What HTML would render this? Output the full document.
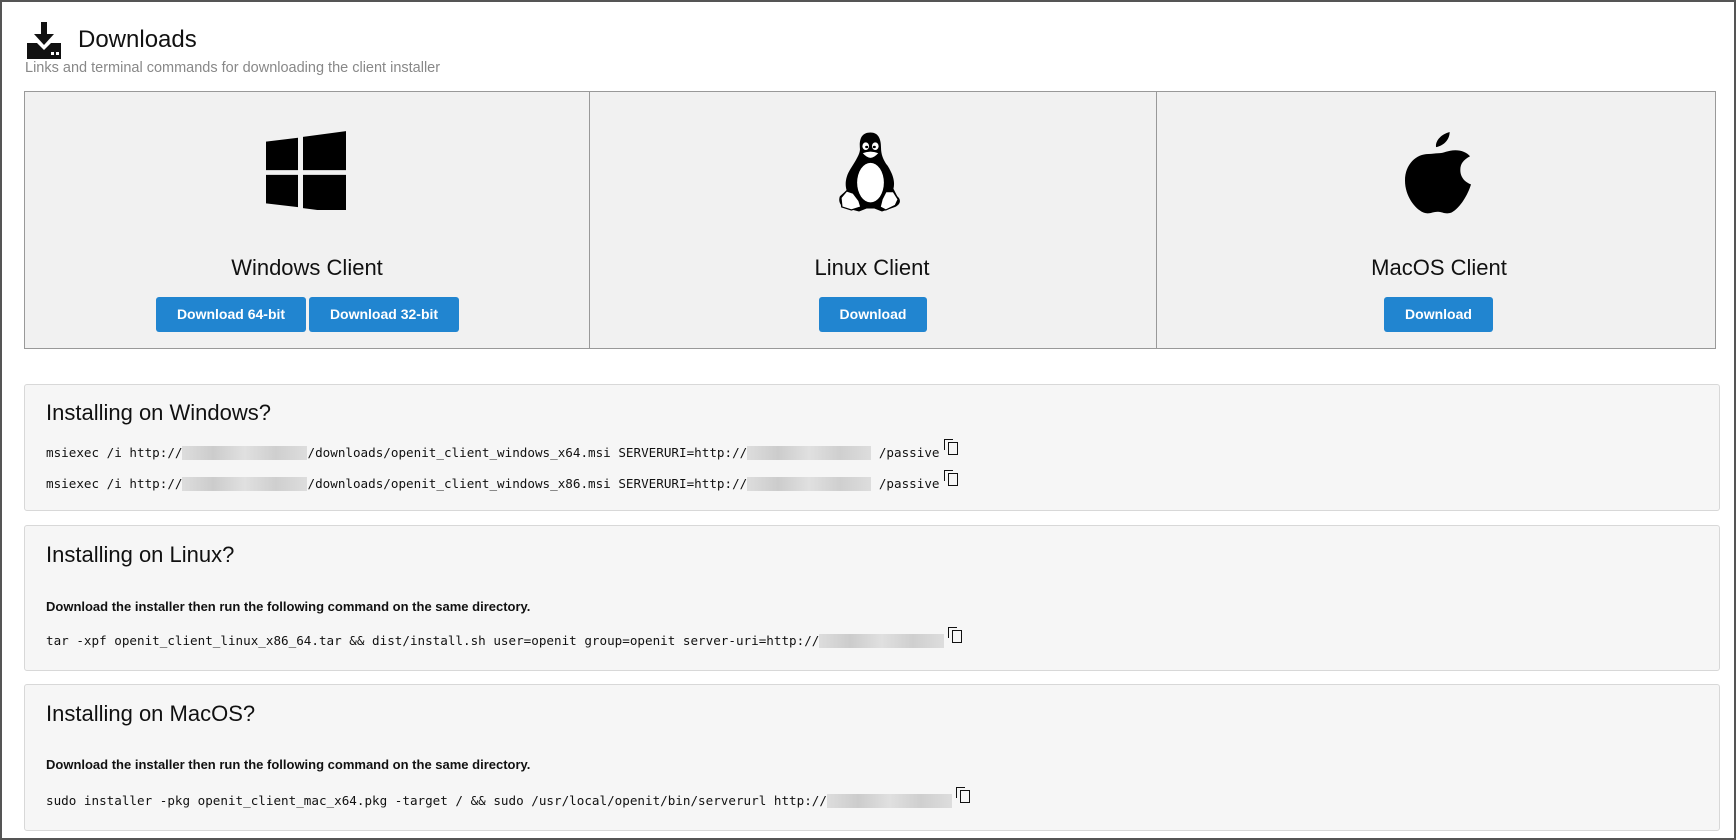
<!DOCTYPE html>
<html><head><meta charset="utf-8"><style>
*{box-sizing:border-box;margin:0;padding:0}
body{width:1736px;height:840px;background:#fff;font-family:"Liberation Sans",sans-serif;position:relative;overflow:hidden;border:2px solid #555;}
.a{position:absolute}
.t{font-size:24px;color:#111}
.sub{font-size:14.5px;color:#888}
.cards{left:22px;top:89px;width:1692px;height:258px;border:1px solid #999;background:#f1f1f1}
.div{top:89px;width:1px;height:258px;background:#999}
.ct{font-size:22px;color:#111;width:564px;text-align:center}
.btn{background:#2185d0;color:#fff;font-weight:bold;font-size:14px;height:35px;line-height:35px;text-align:center;border-radius:3px}
.pan{left:22px;width:1696px;background:#f6f6f6;border:1px solid #d8d8d8;border-radius:3px}
.h{font-size:22px;color:#111;left:44px}
.code{font-family:"DejaVu Sans Mono","Liberation Mono",monospace;font-size:12.6px;color:#111;left:44px;white-space:pre}
.p{font-size:13px;font-weight:bold;color:#111;left:44px}
.bl{display:inline-block;height:14px;vertical-align:-3px;background:linear-gradient(90deg,#ddd,#ccc,#e0e0e0,#cfcfcf,#ddd)}
.cp{display:inline-block;width:14px;height:14px;position:relative;vertical-align:4px;margin-left:4px}
.cp:before{content:"";position:absolute;left:0;top:0;width:8px;height:10px;border:1.5px solid #111;border-right:none;border-bottom:none}
.cp:after{content:"";position:absolute;left:4px;top:3px;width:8px;height:11px;border:1.5px solid #111;background:#f6f6f6}
</style></head><body>
<svg class="a" style="left:24px;top:20px" width="36" height="38" viewBox="0 0 36 38"><rect x="15" y="0" width="6" height="14" fill="#111"/><path d="M8 12 L28 12 L18 23 Z" fill="#111"/><path d="M1 21 L11 21 L18 28 L25 21 L35 21 L35 37 L1 37 Z" fill="#111"/><rect x="25" y="30" width="3" height="3" fill="#fff"/><rect x="30" y="30" width="3" height="3" fill="#fff"/></svg>
<div class="a t" style="left:76px;top:24px">Downloads</div>
<div class="a sub" style="left:23px;top:58px">Links and terminal commands for downloading the client installer</div>
<div class="a cards"></div>
<div class="a div" style="left:587px"></div>
<div class="a div" style="left:1154px"></div>
<svg class="a" style="left:264px;top:128px" width="80" height="80" viewBox="0 0 80 80"><path d="M0 8 L32 4 L32 38 L0 38 Z M37 3 L80 -3 L80 38 L37 38 Z M0 43 L32 43 L32 77 L0 73 Z M37 43 L80 43 L80 84 L37 78 Z" fill="#000" transform="translate(0,4) scale(1,0.95)"/></svg>
<svg class="a" style="left:836px;top:129px" width="65" height="82" viewBox="0 0 68 108" preserveAspectRatio="none"><path d="M34 2 C24 2 22 12 23 24 C23 30 19 38 13 50 C8 60 7 70 9 78 L2 86 C0 92 2 100 10 102 L22 106 L30 102 L38 102 L46 106 L60 100 C66 96 66 90 62 86 L58 76 C60 66 57 56 52 46 C47 38 45 30 45 22 C45 10 42 2 34 2 Z" fill="#000"/><ellipse cx="34" cy="68" rx="14" ry="26" fill="#fff"/><ellipse cx="29" cy="20" rx="3.5" ry="5" fill="#fff"/><ellipse cx="39" cy="20" rx="3.5" ry="5" fill="#fff"/><circle cx="30" cy="21" r="1.6" fill="#000"/><circle cx="38" cy="21" r="1.6" fill="#000"/><path d="M25 29 Q34 24 43 29 Q38 36 34 36 Q30 36 25 29 Z" fill="#fff" stroke="#000" stroke-width="1.2"/><path d="M3 88 L9 79 L16 82 L22 92 L24 100 L14 104 L4 100 Z" fill="#fff" stroke="#000" stroke-width="1.5"/><path d="M46 90 L50 80 L58 80 L63 90 L60 98 L50 104 L44 100 Z" fill="#fff" stroke="#000" stroke-width="1.5"/></svg>
<svg class="a" style="left:1403px;top:130px" width="66" height="82" viewBox="0 0 68 108" preserveAspectRatio="none"><path d="M46 0 C46 10 40 18 32 20 C31 12 37 3 46 0 Z M34 28 C40 28 44 24 52 24 C58 24 64 27 67 32 C60 37 57 42 57 50 C57 60 62 66 68 69 C65 82 57 100 48 106 C42 109 38 105 34 105 C28 105 25 109 19 106 C10 101 0 84 0 64 C0 42 12 29 24 29 C28 29 31 28 34 28 Z" fill="#000"/></svg>
<div class="a ct" style="left:23px;top:253px">Windows Client</div>
<div class="a ct" style="left:588px;top:253px">Linux Client</div>
<div class="a ct" style="left:1155px;top:253px">MacOS Client</div>
<div class="a btn" style="left:154px;top:295px;width:150px">Download 64-bit</div>
<div class="a btn" style="left:307px;top:295px;width:150px">Download 32-bit</div>
<div class="a btn" style="left:817px;top:295px;width:108px">Download</div>
<div class="a btn" style="left:1382px;top:295px;width:109px">Download</div>

<div class="a pan" style="top:382px;height:127px"></div>
<div class="a h" style="top:398px">Installing on Windows?</div>
<div class="a code" style="top:437px">msiexec /i http://<span class="bl" style="width:125px"></span>/downloads/openit_client_windows_x64.msi SERVERURI=http://<span class="bl" style="width:124px"></span> /passive<span class="cp"></span></div>
<div class="a code" style="top:468px">msiexec /i http://<span class="bl" style="width:125px"></span>/downloads/openit_client_windows_x86.msi SERVERURI=http://<span class="bl" style="width:124px"></span> /passive<span class="cp"></span></div>

<div class="a pan" style="top:523px;height:146px"></div>
<div class="a h" style="top:540px">Installing on Linux?</div>
<div class="a p" style="top:597px">Download the installer then run the following command on the same directory.</div>
<div class="a code" style="top:625px">tar -xpf openit_client_linux_x86_64.tar &amp;&amp; dist/install.sh user=openit group=openit server-uri=http://<span class="bl" style="width:125px"></span><span class="cp"></span></div>

<div class="a pan" style="top:682px;height:147px"></div>
<div class="a h" style="top:699px">Installing on MacOS?</div>
<div class="a p" style="top:755px">Download the installer then run the following command on the same directory.</div>
<div class="a code" style="top:785px">sudo installer -pkg openit_client_mac_x64.pkg -target / &amp;&amp; sudo /usr/local/openit/bin/serverurl http://<span class="bl" style="width:125px"></span><span class="cp"></span></div>
</body></html>
